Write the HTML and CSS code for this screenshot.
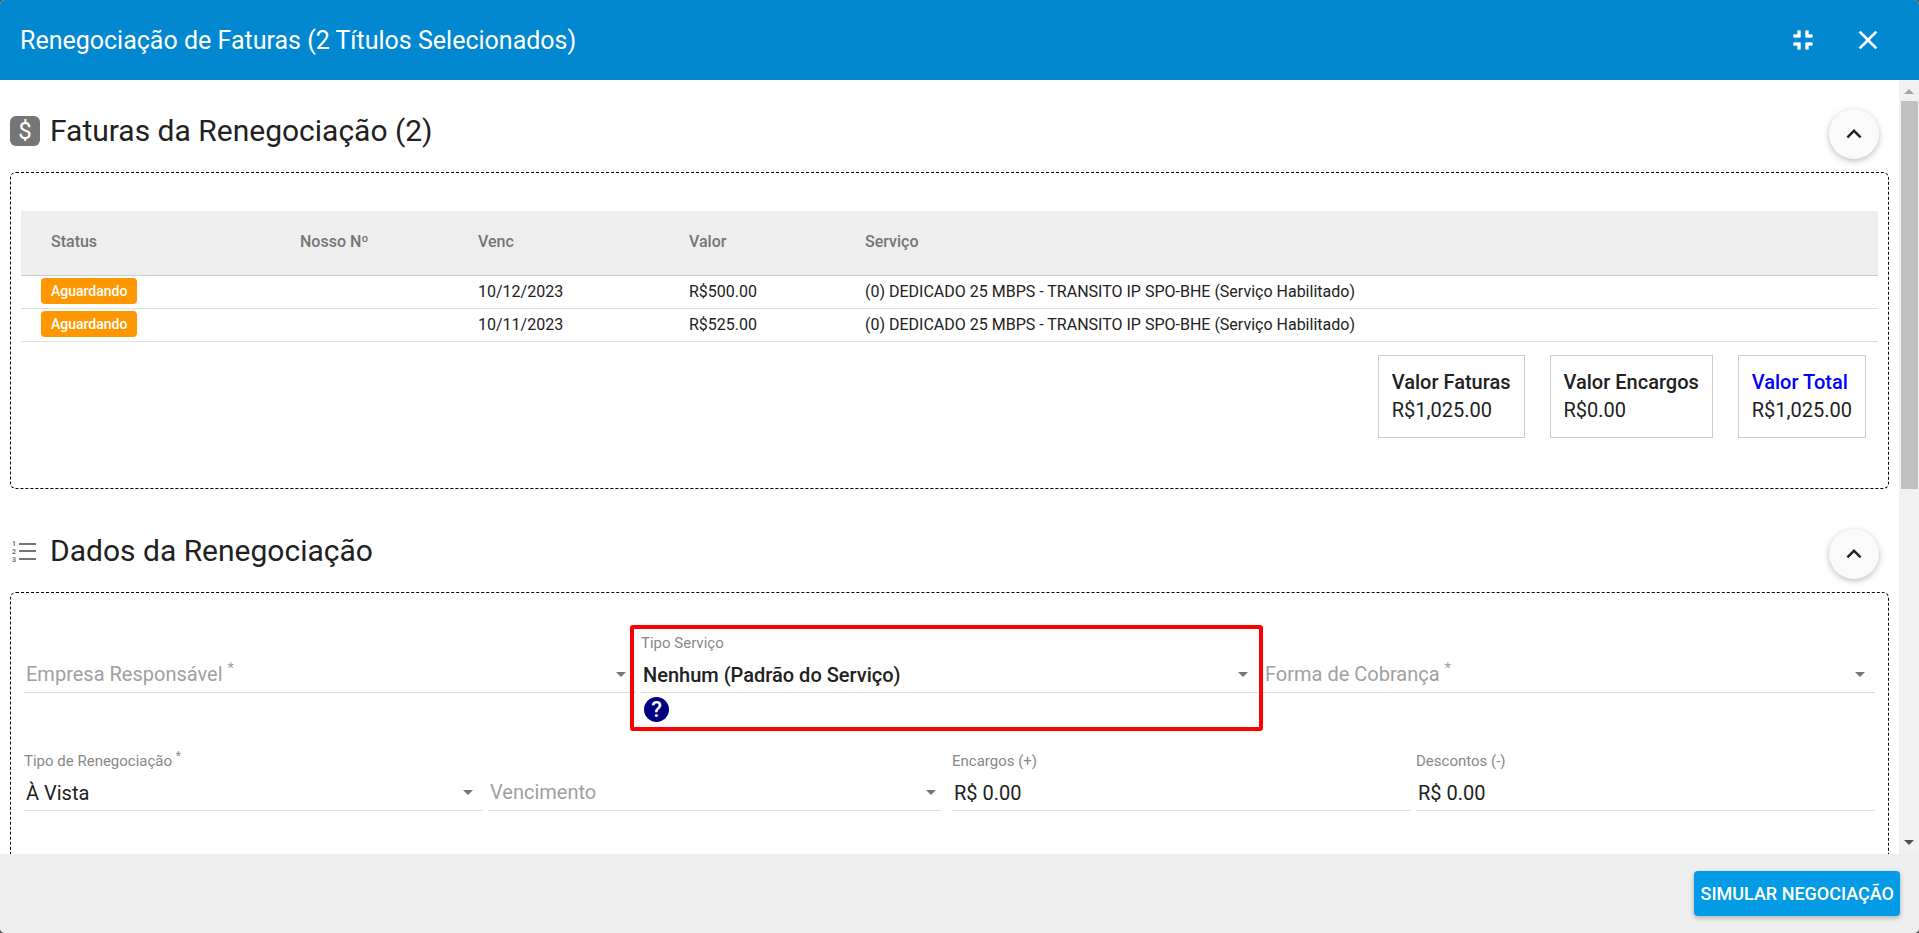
FILE: index.html
```
<!DOCTYPE html>
<html lang="pt-BR">
<head>
  <meta charset="UTF-8" />
  <meta name="viewport" content="width=device-width, initial-scale=1.0"/>
  <title>Renegociação de Faturas</title>
  <link rel="stylesheet" href="styles.css">
</head>
<body>
  <div class="dialog">
    <header class="toolbar">
      <h1>Renegociação de Faturas (2 Títulos Selecionados)</h1>
      <div class="toolbar-actions">
        <button type="button" class="icon-button" aria-label="Sair da tela cheia">
          <svg width="32" height="32" viewBox="0 0 24 24"><path fill="#fff" stroke="#fff" stroke-width=".5" d="M5 16h3v3h2v-5H5v2zm3-8H5v2h5V5H8v3zm6 11h2v-3h3v-2h-5v5zm2-11V5h-2v5h5V8h-3z"/></svg>
        </button>
        <button type="button" class="icon-button" aria-label="Fechar">
          <svg width="32" height="32" viewBox="0 0 24 24"><path fill="#fff" d="M19 6.41L17.59 5 12 10.59 6.41 5 5 6.41 10.59 12 5 17.59 6.41 19 12 13.41 17.59 19 19 17.59 13.41 12z"/></svg>
        </button>
      </div>
    </header>

    <div class="dialog-body">
      <main class="content">
        <!-- Faturas -->
        <section>
          <div class="section-title">
            <span class="money-icon">$</span>
            <h2>Faturas da Renegociação (2)</h2>
            <button type="button" class="fab" aria-label="Recolher faturas">
              <svg width="30" height="30" viewBox="0 0 24 24"><path fill="#212121" d="M7.41 15.41L12 10.83l4.59 4.58L18 14l-6-6-6 6z"/></svg>
            </button>
          </div>
          <div class="panel invoices">
            <table class="invoice-table">
              <thead>
                <tr>
                  <th class="col-status">Status</th>
                  <th class="col-number">Nosso Nº</th>
                  <th class="col-due">Venc</th>
                  <th class="col-value">Valor</th>
                  <th>Serviço</th>
                </tr>
              </thead>
              <tbody>
                <tr>
                  <td><span class="badge">Aguardando</span></td>
                  <td></td>
                  <td>10/12/2023</td>
                  <td>R$500.00</td>
                  <td>(0) DEDICADO 25 MBPS - TRANSITO IP SPO-BHE (Serviço Habilitado)</td>
                </tr>
                <tr>
                  <td><span class="badge">Aguardando</span></td>
                  <td></td>
                  <td>10/11/2023</td>
                  <td>R$525.00</td>
                  <td>(0) DEDICADO 25 MBPS - TRANSITO IP SPO-BHE (Serviço Habilitado)</td>
                </tr>
              </tbody>
            </table>
            <div class="totals">
              <div class="total-box"><strong>Valor Faturas</strong><span>R$1,025.00</span></div>
              <div class="total-box"><strong>Valor Encargos</strong><span>R$0.00</span></div>
              <div class="total-box total-final"><strong>Valor Total</strong><span>R$1,025.00</span></div>
            </div>
          </div>
        </section>

        <!-- Dados -->
        <section class="section-data">
          <div class="section-title">
            <svg class="list-icon" width="30" height="30" viewBox="0 0 30 30">
              <path stroke="#757575" stroke-width="2" d="M9 8h17M9 15h17M9 23h17"/>
              <text x="2" y="10">1</text>
              <text x="2" y="18">2</text>
              <text x="2" y="26">3</text>
            </svg>
            <h2>Dados da Renegociação</h2>
            <button type="button" class="fab" aria-label="Recolher dados">
              <svg width="30" height="30" viewBox="0 0 24 24"><path fill="#212121" d="M7.41 15.41L12 10.83l4.59 4.58L18 14l-6-6-6 6z"/></svg>
            </button>
          </div>
          <form class="panel data-form">
            <div class="form-row three">
              <div class="field select-field empty">
                <label for="empresa">Empresa Responsável <sup>*</sup></label>
                <select id="empresa"><option></option></select>
              </div>
              <div class="field select-field highlight">
                <label for="tipo-servico">Tipo Serviço</label>
                <select id="tipo-servico" class="bold"><option>Nenhum (Padrão do Serviço)</option></select>
                <button type="button" class="help">?</button>
              </div>
              <div class="field select-field empty">
                <label for="cobranca">Forma de Cobrança <sup>*</sup></label>
                <select id="cobranca"><option></option></select>
              </div>
            </div>
            <div class="form-row four">
              <div class="field select-field">
                <label for="tipo-reneg">Tipo de Renegociação <sup>*</sup></label>
                <select id="tipo-reneg"><option>À Vista</option></select>
              </div>
              <div class="field select-field empty due-field">
                <label for="vencimento">Vencimento</label>
                <select id="vencimento"><option></option></select>
              </div>
              <div class="field">
                <label for="encargos">Encargos (+)</label>
                <input type="text" id="encargos" value="R$ 0.00">
              </div>
              <div class="field">
                <label for="descontos">Descontos (-)</label>
                <input type="text" id="descontos" value="R$ 0.00">
              </div>
            </div>
          </form>
        </section>
      </main>

      <div class="scrollbar" aria-hidden="true">
        <span class="arrow-up"></span>
        <div class="track"><div class="thumb"></div></div>
        <span class="arrow-down"></span>
      </div>
    </div>

    <footer class="actions">
      <button type="button" class="btn-primary">SIMULAR NEGOCIAÇÃO</button>
    </footer>
  </div>
</body>
</html>
```

FILE: styles.css
```
* {
  margin: 0;
  padding: 0;
  box-sizing: border-box;
}

body {
  font-family: Roboto, "Liberation Sans", sans-serif;
  color: #212121;
  background-color: #555;
}

button,
input,
select {
  font-family: inherit;
  color: inherit;
  border: none;
  background: none;
}

button {
  cursor: pointer;
}

.dialog {
  display: flex;
  flex-direction: column;
  height: 100vh;
  background-color: #fff;
  border-radius: 5px;
  overflow: hidden;
}

/* Top bar */
.toolbar {
  flex: none;
  display: flex;
  justify-content: space-between;
  align-items: center;
  height: 80px;
  padding: 0 35px 0 20px;
  background-color: #0288d1;
  color: #fff;
}

.toolbar h1 {
  font-size: 25px;
  font-weight: 400;
}

.toolbar-actions {
  display: flex;
  gap: 33px;
}

.icon-button {
  width: 32px;
  height: 32px;
}

.icon-button svg {
  display: block;
}

/* Body */
.dialog-body {
  flex: 1;
  display: flex;
  min-height: 0;
}

.content {
  flex: 1;
  padding: 0 10px;
  overflow-y: auto;
  scrollbar-width: none;
}

.section-title {
  display: flex;
  align-items: center;
  gap: 10px;
  height: 92px;
  padding: 16px 10px 0 0;
}

.section-title h2 {
  flex: 1;
  font-size: 30px;
  line-height: 40px;
  font-weight: 400;
  padding-bottom: 6px;
}

.section-data {
  margin-top: 11px;
}

.money-icon {
  width: 30px;
  height: 30px;
  margin-bottom: 6px;
  border-radius: 6px;
  background-color: #757575;
  color: #fff;
  font-size: 24px;
  line-height: 30px;
  font-weight: 400;
  text-align: center;
}

.list-icon {
  margin-bottom: 6px;
}

.list-icon text {
  font-size: 7px;
  font-weight: 700;
  fill: #757575;
}

.fab {
  display: flex;
  justify-content: center;
  align-items: center;
  width: 50px;
  height: 50px;
  border-radius: 50%;
  background-color: #fafafa;
  box-shadow: 0 2px 6px rgba(0, 0, 0, 0.26);
}

.panel {
  border: 1px dashed #000;
  border-radius: 6px;
}

/* Invoice table */
.invoices {
  padding: 38px 10px 50px;
}

.invoice-table {
  width: 100%;
  table-layout: fixed;
  border-collapse: collapse;
  font-size: 16px;
}

.invoice-table th {
  height: 64px;
  padding: 0 0 2px 30px;
  background-color: #eee;
  border-bottom: 1px solid #ccc;
  color: #757575;
  font-weight: 500;
  text-align: left;
}

.invoice-table td {
  height: 33px;
  padding: 0 0 1px 30px;
  border-bottom: 1px solid #ddd;
}

.invoice-table td:first-child {
  padding-left: 20px;
}

.col-status {
  width: 249px;
}

.col-number {
  width: 178px;
}

.col-due {
  width: 211px;
}

.col-value {
  width: 176px;
}

.badge {
  display: block;
  width: max-content;
  padding: 0 10px;
  border-radius: 4px;
  background-color: #ff9800;
  color: #fff;
  font-size: 14px;
  line-height: 26px;
  font-weight: 500;
}

.totals {
  display: flex;
  justify-content: flex-end;
  gap: 25px;
  padding: 13px 12px 0 0;
}

.total-box {
  display: flex;
  flex-direction: column;
  height: 83px;
  padding: 12px 13px;
  border: 1px solid #ccc;
  font-size: 20px;
  line-height: 28px;
}

.total-box strong {
  font-weight: 500;
}

.total-final strong {
  color: #00f;
}

/* Form */
.data-form {
  padding: 35px 13px 80px;
}

.form-row {
  display: grid;
  column-gap: 5px;
  height: 118px;
}

.three {
  grid-template-columns: 612fr 617fr 612fr;
}

.four {
  grid-template-columns: repeat(4, 1fr);
}

.field {
  position: relative;
  display: grid;
  grid-template-rows: 26px 39px;
  align-content: start;
}

.field label {
  font-size: 15px;
  line-height: 30px;
  color: #888;
}

.field sup {
  font-size: 12px;
  line-height: 1;
}

.field select,
.field input {
  width: 100%;
  height: 39px;
  padding: 5px 3px 0 2px;
  border-bottom: 1px solid #ddd;
  font-size: 20px;
  appearance: none;
  outline: none;
}

.field .bold {
  font-weight: 500;
}

/* label rests on the line while nothing is selected */
.field.empty label {
  grid-area: 2 / 1;
  padding-left: 2px;
  font-size: 20px;
  line-height: 41px;
  color: #a0a0a0;
}

.empty select {
  grid-area: 2 / 1;
}

.field.empty sup {
  font-size: 15px;
}

.select-field::after {
  content: "";
  position: absolute;
  top: 44px;
  right: 10px;
  border: 5px solid transparent;
  border-top-color: #757575;
  border-bottom: none;
}

.field.due-field {
  margin-right: 6px;
}

.due-field::after {
  right: 5px;
}

.highlight::before {
  content: "";
  position: absolute;
  box-sizing: border-box;
  top: -3px;
  left: -11px;
  right: -5px;
  height: 106px;
  border: 4px solid #f00;
  border-radius: 3px;
  pointer-events: none;
}

.help {
  width: 25px;
  height: 25px;
  margin: 4px 3px 0;
  border-radius: 50%;
  background-color: #000080;
  color: #fff;
  font-size: 22px;
  line-height: 25px;
  font-weight: 500;
}

/* Scrollbar */
.scrollbar {
  display: flex;
  flex-direction: column;
  align-items: center;
  width: 20px;
  background-color: #f1f1f1;
}

.arrow-up,
.arrow-down {
  margin: 9px 0 7px;
  border: 5px solid transparent;
}

.arrow-up {
  border-top: none;
  border-bottom-color: #a3a3a3;
}

.arrow-down {
  margin: 7px 0 9px;
  border-bottom: none;
  border-top-color: #505050;
}

.track {
  flex: 1;
  width: 17px;
}

.thumb {
  height: 53%;
  background-color: #c1c1c1;
}

/* Footer */
.actions {
  flex: none;
  display: flex;
  justify-content: flex-end;
  align-items: center;
  height: 79px;
  padding-right: 19px;
  background-color: #eee;
}

.btn-primary {
  height: 45px;
  padding: 0 6px;
  border-radius: 4px;
  background-color: #039be5;
  color: #fff;
  font-size: 18px;
  font-weight: 500;
  box-shadow: 0 2px 5px rgba(0, 0, 0, 0.26);
}
```
